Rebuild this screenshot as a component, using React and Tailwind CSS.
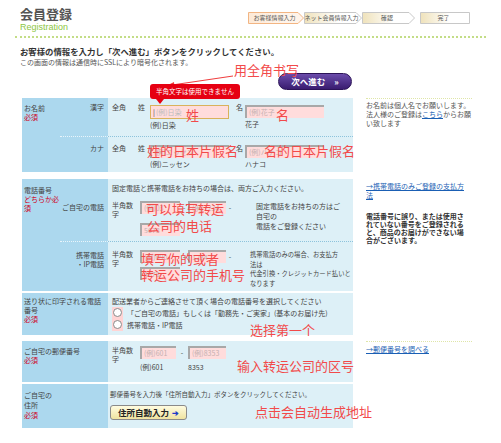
import React from 'react';

const LB = 'bg-[#acd8ee]';
const CT = 'bg-[#ddf0f7]';

function Req() {
  return <span className="text-[#d0021b]">必須</span>;
}

function Step({ w, label, active, last, id }) {
  const pts = last
    ? `0.5,0.5 ${w - 0.5},0.5 ${w - 0.5},11.5 0.5,11.5`
    : `0.5,0.5 ${w - 6},0.5 ${w - 0.5},6 ${w - 6},11.5 0.5,11.5`;
  return (
    <div className="relative">
      <svg width={w} height="12" className="block">
        <defs>
          <linearGradient id={id} x1="0" x2="1" y1="0" y2="0">
            <stop offset="0" stopColor={active ? '#fde9d6' : '#efe2bb'} />
            <stop offset="0.6" stopColor={active ? '#fff4ea' : '#ffffff'} />
          </linearGradient>
        </defs>
        <polygon points={pts} fill={`url(#${id})`} stroke={active ? '#f2b583' : '#c8c8c8'} />
      </svg>
      <span className="absolute inset-0 flex items-center justify-center pr-[3px] text-[6px] leading-none text-[#555] whitespace-nowrap">
        {label}
      </span>
    </div>
  );
}

function Input({ w, ph, focus }) {
  if (focus) {
    return (
      <div className={`${w} h-[14px] bg-[#ffdcdc] border border-[#d9b25c] flex items-center pl-[2px] text-[7px] text-[#bbb]`}>
        <span className="text-[#333] mr-[1px]">|</span>{ph}
      </div>
    );
  }
  return (
    <div className={`${w} h-[13px] bg-[#ffdcdc] border-t-2 border-l-2 border-[#a8a8a8] flex items-center pl-[2px] text-[7px] text-[#c4b0b0]`}>
      {ph}
    </div>
  );
}

function Note({ children, line }) {
  return (
    <div className={`w-[106px] ml-[13px] ${line ? 'border-t border-dotted border-[#dfe6a8]' : ''}`}>
      {children}
    </div>
  );
}

function Ann({ className, children }) {
  return (
    <div className={`absolute font-['Noto_Sans_CJK_SC',sans-serif] text-[13px] leading-[16px] text-[#f24a4a] whitespace-nowrap ${className}`}>
      {children}
    </div>
  );
}

export default function App() {
  return (
    <div className="relative w-[501px] h-[443px] overflow-hidden bg-white font-['Noto_Sans_CJK_JP',sans-serif] text-[#444]">
      {/* header */}
      <div className="flex justify-between pl-[20px] pr-[31px]">
        <div className="pt-[5px]">
          <div className="text-[13px] font-bold leading-[17px] text-[#555]">会員登録</div>
          <div className="text-[9px] leading-[10px] text-[#8cc63f] font-['Liberation_Sans',sans-serif]">Registration</div>
        </div>
        <div className="flex items-start pt-[12px]">
          <Step id="s1" w={56} label="お客様情報入力" active />
          <Step id="s2" w={58} label="ネット会員情報入力" />
          <Step id="s3" w={53} label="確認" />
          <div className="ml-[5px]">
            <Step id="s4" w={50} label="完了" last />
          </div>
        </div>
      </div>
      <div className="mx-[15px] mt-[4px] border-t-2 border-dotted border-[#c3dd86]" />

      <div className="pl-[20px] pt-[8px]">
        <div className="text-[8.4px] font-bold leading-[11px] text-[#333]">お客様の情報を入力し「次へ進む」ボタンをクリックしてください。</div>
        <div className="text-[7px] leading-[10px] text-[#555]">この画面の情報は通信時にSSLにより暗号化されます。</div>
      </div>

      <div className="flex pl-[278px] mt-[6px]">
        <div className="w-[74px] h-[17px] rounded-full bg-linear-to-b from-[#6b4cab] to-[#3a1c70] border border-[#2c1458] flex items-center justify-center gap-[9px] text-white text-[8.5px] font-bold">
          <span>次へ進む</span>
          <span>»</span>
        </div>
      </div>

      {/* table */}
      <div className="pl-[22px] text-[7px] leading-[9px]">
        {/* name row */}
        <div className="flex mt-[8px]">
          <div className="w-[331px] flex h-[74px]">
            <div className={`w-[38px] ${LB} pl-[2px] pt-[6px] text-[#444]`}>
              お名前<br /><Req />
            </div>
            <div className="flex-1 flex flex-col">
              <div className="flex h-[38px]">
                <div className={`w-[48px] ${LB} text-right pr-[4px] pt-[5px]`}>漢字</div>
                <div className={`flex-1 ${CT} flex items-start pl-[4px] pt-[5px]`}>
                  <div className="w-[26px]">全角</div>
                  <div className="w-[12px]">姓</div>
                  <div className="mt-[2px]">
                    <Input w="w-[79px]" ph="(例)日染" focus />
                    <div className="mt-[2px]">(例)日染</div>
                  </div>
                  <div className="w-[9px] ml-[7px]">名</div>
                  <div className="mt-[2px]">
                    <Input w="w-[79px]" ph="(例)花子" />
                    <div className="mt-[2px]">花子</div>
                  </div>
                </div>
              </div>
              <div className="flex h-[36px]">
                <div className={`w-[48px] ${LB} text-right pr-[4px] pt-[7px] border-t border-dotted border-[#e9f5fb]`}>カナ</div>
                <div className={`flex-1 ${CT} flex items-start pl-[4px] pt-[7px] border-t border-dotted border-[#8dc3dc]`}>
                  <div className="w-[26px]">全角</div>
                  <div className="w-[12px]">姓</div>
                  <div className="mt-[1px]">
                    <Input w="w-[79px]" ph="(例)ニッセン" />
                    <div className="mt-[2px]">(例)ニッセン</div>
                  </div>
                  <div className="w-[9px] ml-[7px]">名</div>
                  <div className="mt-[1px]">
                    <Input w="w-[79px]" ph="(例)ハナコ" />
                    <div className="mt-[2px]">ハナコ</div>
                  </div>
                </div>
              </div>
            </div>
          </div>
          <Note line>
            <div className="pt-[2px] leading-[9px] text-[#555]">
              お名前は個人名でお願いします。法人様のご登録は<span className="text-[#1a5fb4] underline">こちら</span>からお願い致します
            </div>
          </Note>
        </div>

        {/* phone row */}
        <div className="flex mt-[7px]">
          <div className="w-[331px] flex h-[112px]">
            <div className={`w-[38px] ${LB} pl-[2px] pt-[7px]`}>
              電話番号<br /><span className="text-[#d0021b]">どちらか必須</span>
            </div>
            <div className="flex-1 flex flex-col">
              <div className="flex h-[62px]">
                <div className={`w-[48px] ${LB} text-right pr-[4px] pt-[24px]`}>ご自宅の電話</div>
                <div className={`flex-1 ${CT} pl-[4px] pt-[5px]`}>
                  <div>固定電話と携帯電話をお持ちの場合は、両方ご入力ください。</div>
                  <div className="flex items-start mt-[8px]">
                    <div className="w-[26px] leading-[9px]">半角数字</div>
                    <div className="w-[100px] ml-[2px] flex flex-wrap items-center gap-y-[9px]">
                      <Input w="w-[40px]" ph="(例)03" />
                      <div className="w-[8px] text-center">-</div>
                      <Input w="w-[38px]" ph="(例)1234" />
                      <div className="w-[8px] text-center">-</div>
                      <Input w="w-[40px]" ph="5678" />
                    </div>
                    <div className="w-[90px] ml-[16px] leading-[10px]">固定電話をお持ちの方はご自宅の<br />電話をご登録ください</div>
                  </div>
                </div>
              </div>
              <div className="flex flex-1">
                <div className={`w-[48px] ${LB} text-right pr-[4px] pt-[9px] border-t border-dotted border-[#e9f5fb]`}>携帯電話<br />・IP電話</div>
                <div className={`flex-1 ${CT} pl-[4px] pt-[8px] flex items-start border-t border-dotted border-[#8dc3dc]`}>
                  <div className="w-[26px] leading-[9px]">半角数字</div>
                  <div className="w-[100px] ml-[2px] flex flex-wrap items-center gap-y-[4px]">
                    <Input w="w-[40px]" ph="(例)090" />
                    <div className="w-[8px] text-center">-</div>
                    <Input w="w-[38px]" ph="1234" />
                    <div className="w-[8px] text-center">-</div>
                    <Input w="w-[40px]" ph="5678" />
                  </div>
                  <div className="ml-[10px] text-[6.3px] leading-[9.5px] whitespace-nowrap">
                    携帯電話のみの場合、お支払方<br />法は<br />代金引換・クレジットカード払いと<br />なります
                  </div>
                </div>
              </div>
            </div>
          </div>
          <Note>
            <div className="w-[101px] pt-[3px] leading-[9px] text-[#1a5fb4] underline">→携帯電話のみご登録の支払方法</div>
            <div className="w-[101px] mt-[12px] leading-[8px] font-bold text-[#333]">電話番号に誤り、または使用されていない番号をご登録されると、商品のお届けができない場合がございます。</div>
          </Note>
        </div>

        {/* label phone row */}
        <div className="flex mt-[2px]">
          <div className="w-[331px] flex h-[42px]">
            <div className={`w-[86px] ${LB} pl-[2px] pr-[1px] pt-[4px]`}>
              送り状に印字される電話番号<br /><Req />
            </div>
            <div className={`flex-1 ${CT} pl-[4px] pt-[4px]`}>
              <div>配送業者からご連絡させて頂く場合の電話番号を選択してください</div>
              <div className="flex mt-[1px]">
                <div className="bg-[#ffd4d4] px-[1px] py-[1px] flex flex-col gap-[3px]">
                  <div className="w-[9px] h-[9px] rounded-full border border-[#8a8a8a] bg-white" />
                  <div className="w-[9px] h-[9px] rounded-full border border-[#8a8a8a] bg-white" />
                </div>
                <div className="ml-[4px] flex flex-col leading-[12px]">
                  <div>「ご自宅の電話」もしくは「勤務先・ご実家」(基本のお届け先)</div>
                  <div>携帯電話・IP電話</div>
                </div>
              </div>
            </div>
          </div>
          <Note />
        </div>

        {/* zip row */}
        <div className="flex mt-[6px]">
          <div className="w-[331px] flex h-[41px]">
            <div className={`w-[86px] ${LB} pl-[2px] pt-[6px]`}>
              ご自宅の郵便番号<br /><Req />
            </div>
            <div className={`flex-1 ${CT} pl-[4px] pt-[5px] flex items-start`}>
              <div className="w-[22px] leading-[9px]">半角数字</div>
              <div className="ml-[6px]">
                <div className="flex items-center">
                  <Input w="w-[36px]" ph="(例)601" />
                  <div className="w-[12px] text-center">-</div>
                  <Input w="w-[38px]" ph="(例)8353" />
                </div>
                <div className="flex mt-[4px]">
                  <div className="w-[48px]">(例)601</div>
                  <div>8353</div>
                </div>
              </div>
            </div>
          </div>
          <Note line>
            <div className="pt-[3px] text-[#1a5fb4] underline">→郵便番号を調べる</div>
          </Note>
        </div>

        {/* address row */}
        <div className="flex mt-[2px]">
          <div className="w-[331px] flex h-[44px]">
            <div className={`w-[86px] ${LB} pl-[2px] pt-[6px] leading-[10px]`}>
              ご自宅の<br />住所<br /><Req />
            </div>
            <div className={`flex-1 ${CT} pl-[2px] pt-[6px]`}>
              <div className="text-[6.5px]">郵便番号を入力後「住所自動入力」ボタンをクリックしてください。</div>
              <div className="mt-[6px] w-[77px] h-[15px] rounded-[3px] border border-[#8a8a8a] bg-linear-to-b from-[#fffce0] to-[#efe3a0] flex items-center justify-center gap-[3px] text-[8.5px] font-bold text-[#222]">
                住所自動入力<span className="text-[#1e3cc8] text-[8px]">➔</span>
              </div>
            </div>
          </div>
          <Note />
        </div>
      </div>

      {/* annotations */}
      <svg className="absolute left-0 top-0 pointer-events-none" width="501" height="443">
        <line x1="233" y1="76" x2="172" y2="85" stroke="#f03c3c" strokeWidth="1" />
        <polygon points="167,85.5 174,82 174.5,87.5" fill="#f03c3c" />
      </svg>
      <div className="absolute left-[150px] top-[84px] w-[90px] h-[15px] rounded-[3px] bg-[#e60012] text-white text-[6.5px] flex items-center justify-center">
        半角文字は使用できません
      </div>
      <div className="absolute left-[156px] top-[99px] w-0 h-0 border-l-[4px] border-r-[4px] border-t-[5px] border-l-transparent border-r-transparent border-t-[#e60012]" />
      <Ann className="left-[234px] top-[62px]">用全角书写</Ann>
      <Ann className="left-[186px] top-[107px] text-[12px]">姓</Ann>
      <Ann className="left-[276px] top-[107px] text-[12px]">名</Ann>
      <Ann className="left-[147px] top-[143px]">姓的日本片假名</Ann>
      <Ann className="left-[264px] top-[143px]">名的日本片假名</Ann>
      <Ann className="left-[146px] top-[201px]">可以填写转运</Ann>
      <Ann className="left-[147px] top-[218px]">公司的电话</Ann>
      <Ann className="left-[141px] top-[251px]">填写你的或者</Ann>
      <Ann className="left-[141px] top-[267px]">转运公司的手机号</Ann>
      <Ann className="left-[250px] top-[322px]">选择第一个</Ann>
      <Ann className="left-[237px] top-[358px]">输入转运公司的区号</Ann>
      <Ann className="left-[255px] top-[404px]">点击会自动生成地址</Ann>
    </div>
  );
}
